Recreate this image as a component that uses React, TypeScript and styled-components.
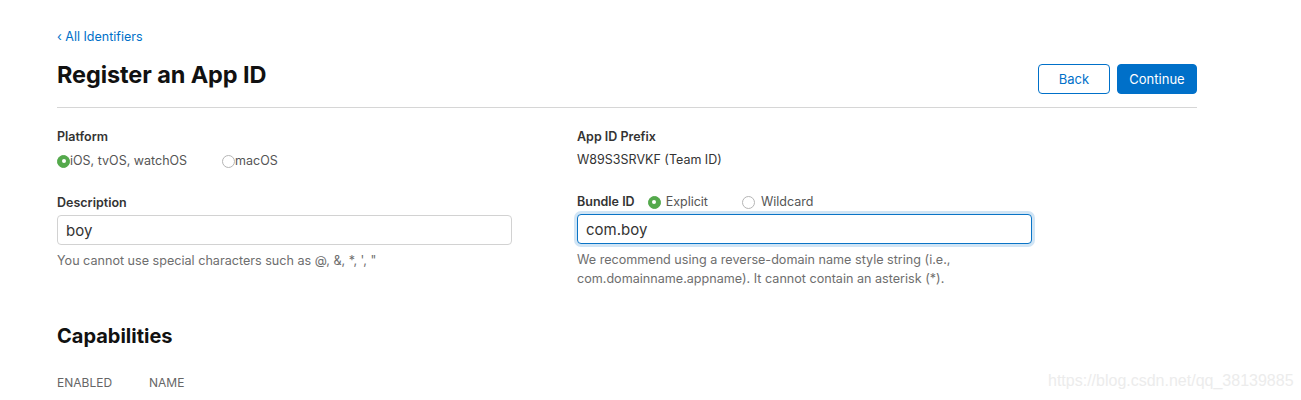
import React, { useState } from "react";
import styled, { createGlobalStyle } from "styled-components";

const GlobalStyle = createGlobalStyle`
  body {
    margin: 0;
    background: #fff;
    font-family: 'Inter', 'Liberation Sans', sans-serif;
    -webkit-font-smoothing: antialiased;
  }
`;

const App = () => {
  const [platform, setPlatform] = useState("ios");
  const [bundleType, setBundleType] = useState("explicit");
  const [description, setDescription] = useState("boy");
  const [bundleId, setBundleId] = useState("com.boy");

  return (
    <Page>
      <GlobalStyle />
      <BackLink href="#">‹ All Identifiers</BackLink>
      <HeaderRow>
        <Title>Register an App ID</Title>
        <Actions>
          <OutlineBtn type="button">Back</OutlineBtn>
          <PrimaryBtn type="button">Continue</PrimaryBtn>
        </Actions>
      </HeaderRow>

      <FormGrid>
        <Field>
          <Label>Platform</Label>
          <RadioRow>
            <RadioOption onClick={() => setPlatform("ios")}>
              <RadioDot $checked={platform === "ios"} />
              iOS, tvOS, watchOS
            </RadioOption>
            <RadioOption onClick={() => setPlatform("mac")}>
              <RadioDot $checked={platform === "mac"} />
              macOS
            </RadioOption>
          </RadioRow>
        </Field>
        <Field>
          <Label>App ID Prefix</Label>
          <Value>W89S3SRVKF (Team ID)</Value>
        </Field>

        <Field>
          <Label>Description</Label>
          <TextInput
            value={description}
            onChange={(e) => setDescription(e.target.value)}
          />
          <Help>You cannot use special characters such as @, &amp;, *, ', "</Help>
        </Field>
        <Field>
          <LabelRow>
            <Label>Bundle ID</Label>
            <BundleRadios>
              <RadioOption $gap={5} onClick={() => setBundleType("explicit")}>
                <RadioDot $checked={bundleType === "explicit"} />
                Explicit
              </RadioOption>
              <RadioOption $gap={6} onClick={() => setBundleType("wildcard")}>
                <RadioDot $checked={bundleType === "wildcard"} />
                Wildcard
              </RadioOption>
            </BundleRadios>
          </LabelRow>
          <TextInput
            $focused
            value={bundleId}
            onChange={(e) => setBundleId(e.target.value)}
          />
          <Help>
            We recommend using a reverse-domain name style string (i.e.,
            <br />
            com.domainname.appname). It cannot contain an asterisk (*).
          </Help>
        </Field>
      </FormGrid>

      <SectionTitle>Capabilities</SectionTitle>
      <TableHead>
        <HeadCell $width={92}>ENABLED</HeadCell>
        <HeadCell>NAME</HeadCell>
      </TableHead>

      <Watermark>https://blog.csdn.net/qq_38139885</Watermark>
    </Page>
  );
};

const Page = styled.div`
  position: relative;
  width: 1301px;
  height: 400px;
  box-sizing: border-box;
  padding: 29px 0 0 57px;
  overflow: hidden;
`;

const BackLink = styled.a`
  display: block;
  font-size: 12.5px;
  line-height: 16px;
  color: #0070c9;
  text-decoration: none;
`;

const HeaderRow = styled.div`
  width: 1140px;
  margin-top: 19px;
  display: flex;
  align-items: center;
  justify-content: space-between;
  padding-bottom: 13px;
  border-bottom: 1px solid #d6d6d6;
`;

const Title = styled.h1`
  margin: -3px 0 0;
  align-self: flex-start;
  font-size: 23.5px;
  line-height: 28px;
  font-weight: 700;
  color: #111;
  letter-spacing: -0.1px;
`;

const Actions = styled.div`
  display: flex;
  gap: 7px;
`;

const BaseBtn = styled.button`
  height: 30px;
  border-radius: 4px;
  font-family: inherit;
  font-size: 13px;
  cursor: pointer;
  padding: 0;
`;

const OutlineBtn = styled(BaseBtn)`
  width: 72px;
  background: #fff;
  border: 1px solid #0070c9;
  color: #0070c9;
`;

const PrimaryBtn = styled(BaseBtn)`
  width: 80px;
  background: #0070c9;
  border: 1px solid #0070c9;
  color: #fff;
`;

const FormGrid = styled.div`
  display: grid;
  grid-template-columns: 455px 455px;
  column-gap: 65px;
  row-gap: 26px;
  margin-top: 21px;
`;

const Field = styled.div`
  display: flex;
  flex-direction: column;
`;

const Label = styled.div`
  font-size: 12.5px;
  line-height: 16px;
  font-weight: 600;
  color: #333;
`;

const LabelRow = styled.div`
  display: flex;
  align-items: center;
  gap: 13px;
  margin-top: -1px;
`;

const Value = styled.div`
  margin-top: 7px;
  font-size: 12.5px;
  line-height: 16px;
  color: #333;
`;

const RadioRow = styled.div`
  display: flex;
  gap: 35px;
  margin-top: 8px;
`;

const BundleRadios = styled.div`
  display: flex;
  gap: 34px;
`;

const RadioOption = styled.label<{ $gap?: number }>`
  display: flex;
  align-items: center;
  gap: ${(p) => p.$gap ?? 0}px;
  font-size: 12.5px;
  line-height: 16px;
  color: #555;
  cursor: pointer;
`;

const RadioDot = styled.span<{ $checked?: boolean }>`
  width: 13px;
  height: 13px;
  border-radius: 50%;
  box-sizing: border-box;
  position: relative;
  flex: none;
  background: ${(p) => (p.$checked ? "#54a94c" : "#fff")};
  border: 1px solid ${(p) => (p.$checked ? "#54a94c" : "#b5b5b5")};
  &::after {
    content: "";
    display: ${(p) => (p.$checked ? "block" : "none")};
    position: absolute;
    left: 50%;
    top: 50%;
    width: 4px;
    height: 4px;
    margin: -2px 0 0 -2px;
    border-radius: 50%;
    background: #fff;
  }
`;

const TextInput = styled.input<{ $focused?: boolean }>`
  margin-top: 4px;
  height: 30px;
  box-sizing: border-box;
  padding: 0 8px;
  border-radius: 4px;
  font-family: inherit;
  font-size: 15px;
  color: #333;
  outline: none;
  border: 1px solid ${(p) => (p.$focused ? "#0a74c6" : "#d2d2d2")};
  box-shadow: ${(p) =>
    p.$focused ? "0 0 0 3px rgba(0, 112, 201, 0.18)" : "none"};
`;

const Help = styled.div`
  margin-top: 6px;
  font-size: 12.6px;
  line-height: 19px;
  color: #6e6e6e;
`;

const SectionTitle = styled.h2`
  margin: 36px 0 0;
  font-size: 20px;
  line-height: 24px;
  font-weight: 700;
  color: #111;
`;

const TableHead = styled.div`
  display: flex;
  margin-top: 27px;
`;

const HeadCell = styled.div<{ $width?: number }>`
  width: ${(p) => (p.$width ? `${p.$width}px` : "auto")};
  font-size: 12px;
  line-height: 16px;
  color: #666;
`;

const Watermark = styled.div`
  position: absolute;
  left: 1048px;
  top: 371px;
  font-family: 'Liberation Sans', sans-serif;
  font-size: 16px;
  line-height: 20px;
  color: #ececec;
  white-space: nowrap;
  pointer-events: none;
`;

export default App;
